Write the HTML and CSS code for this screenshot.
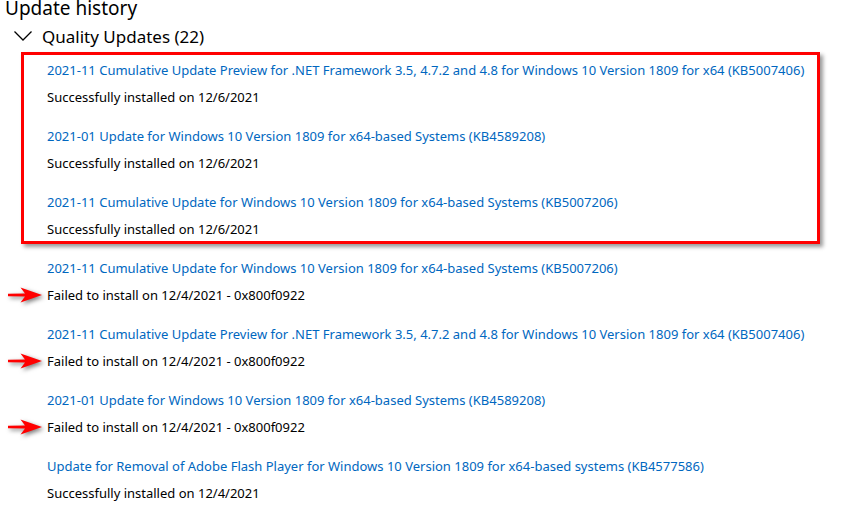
FILE: index.html
```
<!DOCTYPE html>
<html lang="en">
<head>
<meta charset="UTF-8">
<title>Update history</title>
<link rel="stylesheet" href="styles.css">
</head>
<body>

<h1 class="title">Update history</h1>

<div class="group-head">
    <svg class="chevron" width="18" height="10" viewBox="0 0 18 10"><path d="M0.5 0.5 L9 9 L17.5 0.5" fill="none" stroke="#000" stroke-width="1.3"/></svg>
    <span>Quality Updates (22)</span>
</div>

<div class="list">
    <div class="marked">
        <div class="item">
            <a class="link">2021-11 Cumulative Update Preview for .NET Framework 3.5, 4.7.2 and 4.8 for Windows 10 Version 1809 for x64 (KB5007406)</a>
            <div class="status">Successfully installed on 12/6/2021</div>
        </div>
        <div class="item">
            <a class="link">2021-01 Update for Windows 10 Version 1809 for x64-based Systems (KB4589208)</a>
            <div class="status">Successfully installed on 12/6/2021</div>
        </div>
        <div class="item">
            <a class="link">2021-11 Cumulative Update for Windows 10 Version 1809 for x64-based Systems (KB5007206)</a>
            <div class="status">Successfully installed on 12/6/2021</div>
        </div>
    </div>

    <div class="item">
        <a class="link">2021-11 Cumulative Update for Windows 10 Version 1809 for x64-based Systems (KB5007206)</a>
        <div class="status failed">
            <svg class="arrow" width="40" height="20" viewBox="0 0 40 20"><path d="M0 8.7 L17 8.4 L12.5 2.5 L34 10 L12.5 17.5 L17 11.6 L0 11.3 Z" fill="#f00"/></svg>
            Failed to install on 12/4/2021 - 0x800f0922
        </div>
    </div>
    <div class="item">
        <a class="link">2021-11 Cumulative Update Preview for .NET Framework 3.5, 4.7.2 and 4.8 for Windows 10 Version 1809 for x64 (KB5007406)</a>
        <div class="status failed">
            <svg class="arrow" width="40" height="20" viewBox="0 0 40 20"><path d="M0 8.7 L17 8.4 L12.5 2.5 L34 10 L12.5 17.5 L17 11.6 L0 11.3 Z" fill="#f00"/></svg>
            Failed to install on 12/4/2021 - 0x800f0922
        </div>
    </div>
    <div class="item">
        <a class="link">2021-01 Update for Windows 10 Version 1809 for x64-based Systems (KB4589208)</a>
        <div class="status failed">
            <svg class="arrow" width="40" height="20" viewBox="0 0 40 20"><path d="M0 8.7 L17 8.4 L12.5 2.5 L34 10 L12.5 17.5 L17 11.6 L0 11.3 Z" fill="#f00"/></svg>
            Failed to install on 12/4/2021 - 0x800f0922
        </div>
    </div>
    <div class="item">
        <a class="link">Update for Removal of Adobe Flash Player for Windows 10 Version 1809 for x64-based systems (KB4577586)</a>
        <div class="status">Successfully installed on 12/4/2021</div>
    </div>
</div>

</body>
</html>
```

FILE: styles.css
```
body {
    margin: 0;
    background: #fff;
    color: #000;
    font-family: "Noto Sans", "Open Sans", sans-serif;
    overflow: hidden;
}
.title {
    margin: -3px 0 0 5px;
    font-size: 19px;
    font-weight: 400;
    line-height: 22px;
}
.group-head {
    display: flex;
    align-items: center;
    height: 24px;
    margin-top: 5px;
    padding-left: 14px;
    font-size: 17px;
    font-weight: 400;
}
.chevron {
    margin-right: 10px;
}
.list {
    margin-top: 4px;
}
.marked {
    margin-left: 21px;
    width: 799px;
    border: 3px solid #f00;
    padding: 5px 0 2px 23px;
    margin-bottom: 14px;
    box-sizing: border-box;
    box-shadow: 3px 3px 4px rgba(0,0,0,.4);
}
.list > .item {
    margin-left: 47px;
}
.item {
    margin-bottom: 19px;
}
.marked .item:last-child {
    margin-bottom: 0;
}
.link {
    display: block;
    color: #0067c0;
    font-size: 13px;
    line-height: 20px;
    white-space: nowrap;
    cursor: pointer;
}
.status {
    position: relative;
    margin-top: 7px;
    font-size: 13px;
    line-height: 20px;
}
.arrow {
    position: absolute;
    left: -39px;
    top: 0;
    filter: drop-shadow(2px 2px 2px rgba(0,0,0,.5));
}
```
